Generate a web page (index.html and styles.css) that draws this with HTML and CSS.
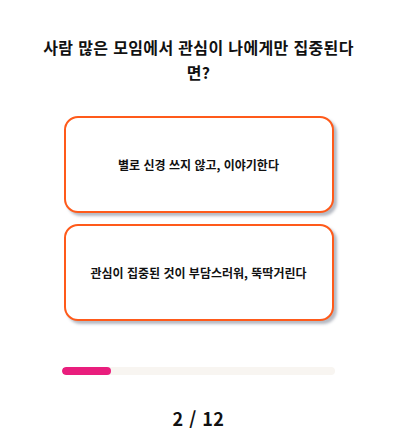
FILE: index.html
```html
<!DOCTYPE html>
<html lang="ko">
<head>
<meta charset="utf-8">
<link rel="stylesheet" href="styles.css">
</head>
<body>
<main class="quiz">
  <h1 class="question">사람 많은 모임에서 관심이 나에게만 집중된다면?</h1>
  <div class="options">
    <button class="option">별로 신경 쓰지 않고, 이야기한다</button>
    <button class="option">관심이 집중된 것이 부담스러워, 뚝딱거린다</button>
  </div>
  <div class="progress"><div class="progress-fill" style="width: 18%"></div></div>
  <div class="counter">2 / 12</div>
</main>
</body>
</html>
```
FILE: styles.css
```css
html, body {
  margin: 0;
  padding: 0;
  background: #ffffff;
}
body {
  font-family: "Noto Sans CJK KR", "Noto Sans", sans-serif;
  color: #111111;
}
.quiz {
  width: 397px;
  display: flex;
  flex-direction: column;
  align-items: center;
  padding-top: 35px;
}
.question {
  margin: 0;
  width: 330px;
  font-size: 16px;
  line-height: 25px;
  font-weight: 700;
  letter-spacing: 0.35px;
  text-align: center;
}
.options {
  margin-top: 31px;
  display: flex;
  flex-direction: column;
  gap: 11px;
}
.option {
  width: 270px;
  height: 97px;
  box-sizing: border-box;
  border: 2px solid #ff5a1a;
  border-radius: 14px;
  background: #ffffff;
  box-shadow: 3px 3px 3px rgba(90, 100, 120, 0.45);
  font-family: inherit;
  font-size: 12px;
  font-weight: 700;
  color: #111111;
  padding: 0;
}
.progress {
  margin-top: 46px;
  width: 273px;
  height: 8px;
  border-radius: 4px;
  background: #f8f5f1;
  overflow: hidden;
}
.progress-fill {
  height: 100%;
  background: #e91e7d;
  border-radius: 4px;
}
.counter {
  margin-top: 30px;
  font-size: 18px;
  font-weight: 700;
  letter-spacing: 0.5px;
}
```
